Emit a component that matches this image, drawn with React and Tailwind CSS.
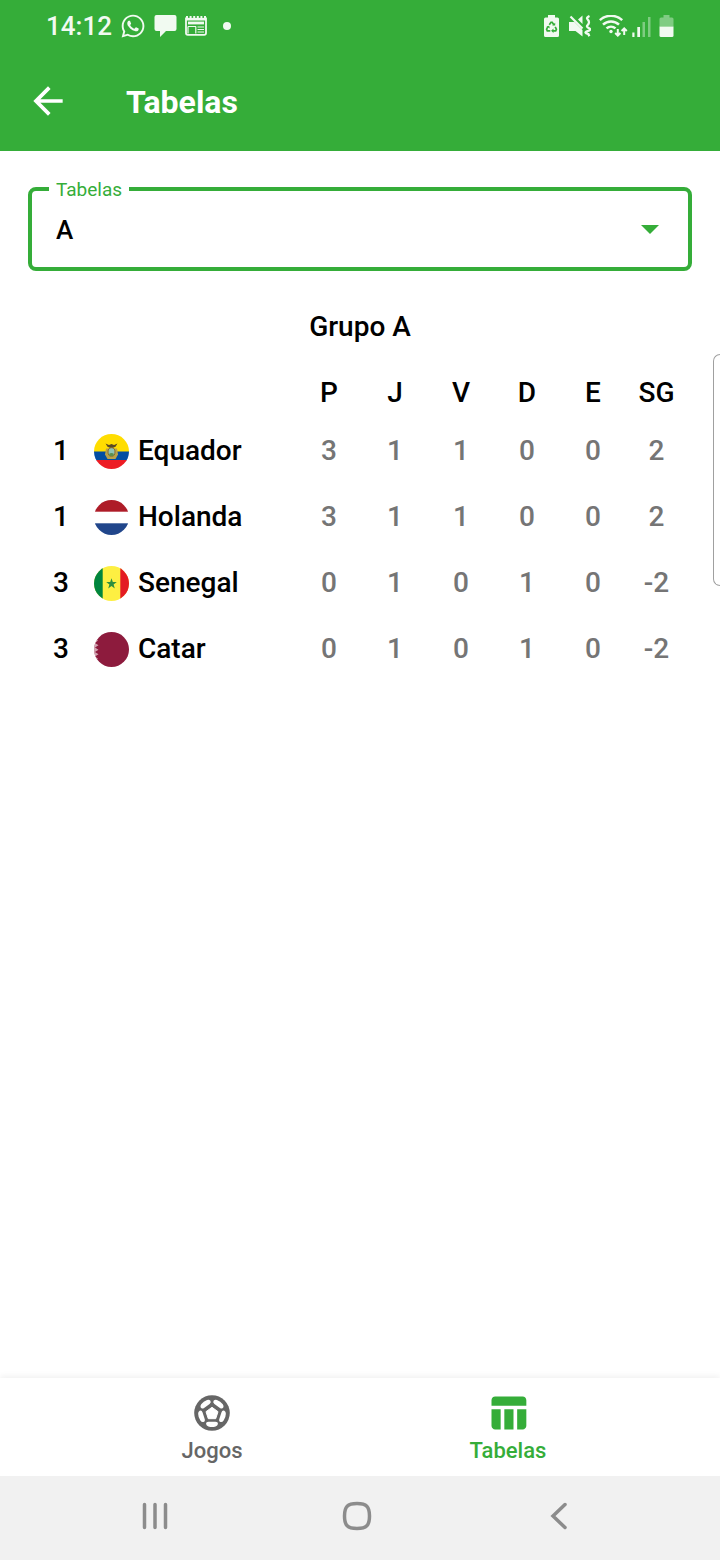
import { useState } from "react";
import { FaWhatsapp } from "react-icons/fa";
import { MdArrowBack, MdTableChart } from "react-icons/md";

const COLUMNS = ["P", "J", "V", "D", "E", "SG"];

const TEAMS = [
  { rank: 1, name: "Equador", Flag: EcuadorFlag, stats: [3, 1, 1, 0, 0, 2] },
  { rank: 1, name: "Holanda", Flag: NetherlandsFlag, stats: [3, 1, 1, 0, 0, 2] },
  { rank: 3, name: "Senegal", Flag: SenegalFlag, stats: [0, 1, 0, 1, 0, -2] },
  { rank: 3, name: "Catar", Flag: QatarFlag, stats: [0, 1, 0, 1, 0, -2] },
];

function FlagCircle({ id, children }) {
  return (
    <svg viewBox="0 0 35 35" className="block size-[35px]" aria-hidden="true">
      <clipPath id={id}>
        <circle cx="17.5" cy="17.5" r="17.5" />
      </clipPath>
      <g clipPath={`url(#${id})`}>{children}</g>
    </svg>
  );
}

function EcuadorFlag() {
  return (
    <FlagCircle id="flag-ec">
      <rect width="35" height="18" fill="#ffdd00" />
      <rect y="17.5" width="35" height="9" fill="#034ea2" />
      <rect y="26" width="35" height="9" fill="#ed1c24" />
      <path d="M11.5 9.500 15 11l2.500-1 2.500 1 3.500-1.500-2 3.300-3 1.200h-2l-3-1.200z" fill="#5b4a22" />
      <path d="M12 14.500h11l1 6-2.500 4.500h-8l-2.500-4.500z" fill="#b9a24a" />
      <ellipse cx="17.500" cy="18" rx="3.500" ry="4.300" fill="#8fc4b4" stroke="#8a6d2b" strokeWidth="1" />
      <path d="M15 20q2.500-2 5 0l-1 2h-3z" fill="#5a8f4e" />
    </FlagCircle>
  );
}

function NetherlandsFlag() {
  return (
    <FlagCircle id="flag-nl">
      <rect width="35" height="35" fill="#ffffff" />
      <rect width="35" height="11.700" fill="#ae1c28" />
      <rect y="23.300" width="35" height="11.700" fill="#21468b" />
    </FlagCircle>
  );
}

function SenegalFlag() {
  return (
    <FlagCircle id="flag-sn">
      <rect width="35" height="35" fill="#fdef42" />
      <rect width="8.700" height="35" fill="#00853f" />
      <rect x="26.300" width="8.700" height="35" fill="#e31b23" />
      <path d="M17.500 12.300l1.300 3.800h4l-3.200 2.400 1.200 3.900-3.300-2.400-3.300 2.400 1.200-3.900-3.200-2.400h4z" fill="#2f8f3f" />
    </FlagCircle>
  );
}

function QatarFlag() {
  return (
    <FlagCircle id="flag-qa">
      <rect width="35" height="35" fill="#8d1b3d" />
      <path
        d="M0 6l4 2.400L1 11l3.500 2.200L1 15.500l3.500 2.200L1 20l3.500 2.300L1 24.500l3 2.300L0 29z"
        fill="#ffffff"
        opacity="0.600"
      />
    </FlagCircle>
  );
}

function ChatIcon() {
  return (
    <svg viewBox="0 0 23 22" className="h-[22px] w-[23px]" fill="currentColor" aria-hidden="true">
      <path d="M2.500 0h18A2 2 0 0 1 22.500 2v12a2 2 0 0 1-2 2H12l-6 6v-6H2.500a2 2 0 0 1-2-2V2a2 2 0 0 1 2-2z" />
    </svg>
  );
}

function NewsIcon() {
  return (
    <svg viewBox="0 0 22 20" className="h-5 w-[22px]" fill="none" stroke="currentColor" aria-hidden="true">
      <path d="M1 1.500V17a1.800 1.800 0 0 0 1.800 1.800h16.400A1.800 1.800 0 0 0 21 17V1.500" strokeWidth="1.800" />
      <path d="M1 1h20" strokeWidth="2" strokeDasharray="2 1.600" />
      <path d="M1 3.200h20" strokeWidth="2.600" />
      <path d="M3 7h16" strokeWidth="2.800" />
      <path d="M3 10.500h8M12.500 11h6.500M12.500 13.500h6.500M12.500 16h6.500M3 10.400v7M10.800 10.400v7" strokeWidth="1.200" />
    </svg>
  );
}

function RecycleBatteryIcon() {
  return (
    <svg viewBox="0 0 15 22" className="h-[22px] w-[15px]" aria-hidden="true">
      <path d="M4 0h7v2.500h2.500A1.500 1.500 0 0 1 15 4v16.500a1.500 1.500 0 0 1-1.500 1.500h-12A1.500 1.500 0 0 1 0 20.500V4a1.500 1.500 0 0 1 1.500-1.500H4z" fill="currentColor" />
      <g fill="none" stroke="#35ad39" strokeWidth="1.700">
        <path d="M5.300 9.700 7 7.300h1.200l1.600 2.500" />
        <path d="M11.200 11.800l1.200 2.400-.7 1.600H8.700" />
        <path d="M3.900 11.600l-1.300 2.600.7 1.600h3" />
      </g>
      <path d="M8.200 10.600h3V7.800zM9.500 13.600v4.300l-2.400-2.100zM2.500 11.600l2.700-.8.600 2.700z" fill="#35ad39" />
    </svg>
  );
}

function MuteVibrateIcon() {
  return (
    <svg viewBox="0 0 22 22" className="size-[22px]" fill="none" stroke="currentColor" aria-hidden="true">
      <path d="M0 7h5.500L13.500 15v6.500L6.500 16H0zM9 4.500 13.500.500v8.500z" fill="currentColor" stroke="none" />
      <path d="M1.500 1.500 13.500 13.500" strokeWidth="2.200" />
      <path d="M20.500 1q-3.500 1.700-2 3.200t1.500 3-1.500 3 1.500 3-1.500 3 1 3l.800 2" strokeWidth="2.300" />
    </svg>
  );
}

function WifiIcon() {
  return (
    <svg viewBox="0 0 29 22" className="h-[22px] w-[29px]" fill="none" stroke="currentColor" aria-hidden="true">
      <path d="M.8 5.200a16.500 16.500 0 0 1 22.400 0M4 9.700a11.500 11.500 0 0 1 16 0M7.500 13.400a6.800 6.800 0 0 1 9 0" strokeWidth="2.500" />
      <circle cx="12" cy="16.500" r="1.700" fill="currentColor" stroke="none" />
      <path d="M18.800 14v6.500M16.200 18l2.600 2.600 2.600-2.600M25.200 20v-6.500M22.600 16l2.600-2.600 2.600 2.600" strokeWidth="2" />
    </svg>
  );
}

function SignalIcon() {
  return (
    <svg viewBox="0 0 19 22" className="h-[22px] w-[19px]" fill="currentColor" aria-hidden="true">
      <path d="M.3 17.500h2.200V22H.3zM5.300 12h2.700v10H5.300z" />
      <path d="M10.500 7h2.500v15h-2.500zM16 2h2.500v20H16z" opacity="0.400" />
    </svg>
  );
}

function BatteryIcon() {
  return (
    <svg viewBox="0 0 15 22" className="h-[22px] w-[15px]" fill="currentColor" aria-hidden="true">
      <path d="M4.500 0h6v2.500H13A1.500 1.500 0 0 1 14.500 4v7.500H.5V4A1.500 1.500 0 0 1 2 2.500h2.500z" opacity="0.400" />
      <path d="M.5 11.500h14v9A1.500 1.500 0 0 1 13 22H2a1.500 1.500 0 0 1-1.500-1.500z" />
    </svg>
  );
}

function BallIcon() {
  return (
    <svg viewBox="0 0 36 36" className="size-9" aria-hidden="true">
      <circle cx="18" cy="18" r="17.800" fill="currentColor" />
      <path d="M18 12.300l6 4.400-2.300 7h-7.400l-2.300-7z" fill="#fff" stroke="#fff" strokeWidth="1" strokeLinejoin="round" />
      <g fill="#fff">
        {[0, 72, 144, 216, 288].map((angle) => (
          <path
            key={angle}
            transform={`rotate(${angle} 18 18)`}
            d="M14.600 26.800h6.800q2.600 0 2.500 2.300-.3 1.700-2.300 2.300-3.600 1.100-7.200 0-2-.6-2.300-2.300-.1-2.300 2.500-2.300z"
          />
        ))}
      </g>
    </svg>
  );
}

function StatusBar() {
  return (
    <div className="flex h-[51px] items-center justify-between pr-[46px] pl-[46px] text-[#f1faf1]">
      <div className="flex items-center gap-2">
        <span className="text-[26px] leading-8 font-medium">14:12</span>
        <FaWhatsapp className="size-[26px]" aria-hidden="true" />
        <ChatIcon />
        <NewsIcon />
        <span className="ml-2 size-2 rounded-full bg-current" />
      </div>
      <div className="flex items-center gap-2">
        <div className="mr-1 flex items-center gap-2.5">
          <RecycleBatteryIcon />
          <div className="flex items-center gap-2">
            <MuteVibrateIcon />
            <WifiIcon />
          </div>
        </div>
        <div className="-ml-2 flex items-center gap-2">
          <SignalIcon />
          <BatteryIcon />
        </div>
      </div>
    </div>
  );
}

function GroupSelect({ value, onChange }) {
  return (
    <div className="relative mx-7 mt-9 h-[84px]">
      <select
        id="group"
        value={value}
        onChange={(event) => onChange(event.target.value)}
        className="h-full w-full appearance-none rounded-lg border-4 border-[#35ad39] bg-white px-6 pt-0.5 text-[26px] font-medium text-black outline-none"
      >
        <option value="A">A</option>
      </select>
      <label htmlFor="group" className="absolute -top-[9px] left-[21px] bg-white px-[7px] text-[19px] leading-6 text-[#35ad39]">
        Tabelas
      </label>
      <svg viewBox="0 0 18 9" className="pointer-events-none absolute top-[38px] right-[33px] h-[9px] w-[18px]" aria-hidden="true">
        <path d="M0 0h18L9 9z" fill="#35ad39" />
      </svg>
    </div>
  );
}

function Standings() {
  return (
    <section className="pt-[38px] text-[28px] font-medium text-black">
      <h2 className="text-center leading-9">Grupo A</h2>
      <div className="mt-[23px] pr-[33px] pl-7">
        <table className="w-full table-fixed border-collapse">
          <colgroup>
            <col className="w-[66px]" />
            <col />
            {COLUMNS.map((column) => (
              <col key={column} className={column === "SG" ? "w-[61px]" : "w-[66px]"} />
            ))}
          </colgroup>
          <thead>
            <tr className="h-[50px]">
              <td colSpan={2} />
              {COLUMNS.map((column) => (
                <th key={column} scope="col" className="p-0 font-medium">
                  {column}
                </th>
              ))}
            </tr>
          </thead>
          <tbody>
            {TEAMS.map(({ rank, name, Flag, stats }) => (
              <tr key={name} className="h-[66px]">
                <td className="p-0 text-center">{rank}</td>
                <th scope="row" className="p-0 text-left font-medium">
                  <div className="flex items-center gap-[9px]">
                    <Flag />
                    {name}
                  </div>
                </th>
                {stats.map((stat, index) => (
                  <td key={COLUMNS[index]} className="p-0 text-center text-[#757575]">
                    {stat}
                  </td>
                ))}
              </tr>
            ))}
          </tbody>
        </table>
      </div>
    </section>
  );
}

function TabBar() {
  return (
    <nav className="grid h-[98px] grid-cols-2 bg-white px-16 text-[22px] leading-8 font-medium shadow-[0_-2px_6px_rgba(0,0,0,0.06)]">
      <a href="#jogos" className="flex flex-col items-center pt-[13px] text-[#666666]">
        <span className="flex h-11 items-center">
          <BallIcon />
        </span>
        Jogos
      </a>
      <a href="#tabelas" aria-current="page" className="flex flex-col items-center pt-[13px] text-[#35ad39]">
        <MdTableChart className="size-11" aria-hidden="true" />
        Tabelas
      </a>
    </nav>
  );
}

function SystemBar() {
  return (
    <div className="grid h-[84px] grid-cols-3 items-center bg-[#f1f1f1] pr-[60px] pb-1 pl-[54px] text-[#8c8c8c]">
      <button type="button" aria-label="Recentes" className="flex justify-center">
        <svg viewBox="0 0 28 28" className="size-7" fill="none" stroke="currentColor" strokeWidth="3.500" strokeLinecap="round">
          <path d="M3.500 2.500v23M14 2.500v23M24.500 2.500v23" />
        </svg>
      </button>
      <button type="button" aria-label="Início" className="flex justify-center">
        <svg viewBox="0 0 30 30" className="size-[30px]" fill="none" stroke="currentColor" strokeWidth="3.500">
          <path d="M15 2.500c9.500 0 12.500 3 12.500 12.500S24.500 27.500 15 27.500 2.500 24.500 2.500 15 5.500 2.500 15 2.500z" />
        </svg>
      </button>
      <button type="button" aria-label="Voltar" className="flex justify-center">
        <svg viewBox="0 0 28 28" className="size-7" fill="none" stroke="currentColor" strokeWidth="3.500" strokeLinecap="round">
          <path d="M20 2.500 8 14l12 11.500" />
        </svg>
      </button>
    </div>
  );
}

export default function App() {
  const [group, setGroup] = useState("A");

  return (
    <div className="relative flex min-h-screen flex-col overflow-hidden bg-white font-[Roboto,sans-serif]">
      <header className="bg-[#35ad39] text-white">
        <StatusBar />
        <div className="flex h-[100px] items-center gap-14 pl-[26px]">
          <button type="button" aria-label="Voltar">
            <MdArrowBack className="size-11" />
          </button>
          <h1 className="pt-0.5 text-[32px] leading-10 font-bold">Tabelas</h1>
        </div>
      </header>
      <main className="grow">
        <GroupSelect value={group} onChange={setGroup} />
        <Standings />
      </main>
      <div className="absolute top-[354px] right-0 h-[232px] w-[7px] rounded-l-lg border border-r-0 border-[#a0a0a0] bg-white" />
      <TabBar />
      <SystemBar />
    </div>
  );
}
